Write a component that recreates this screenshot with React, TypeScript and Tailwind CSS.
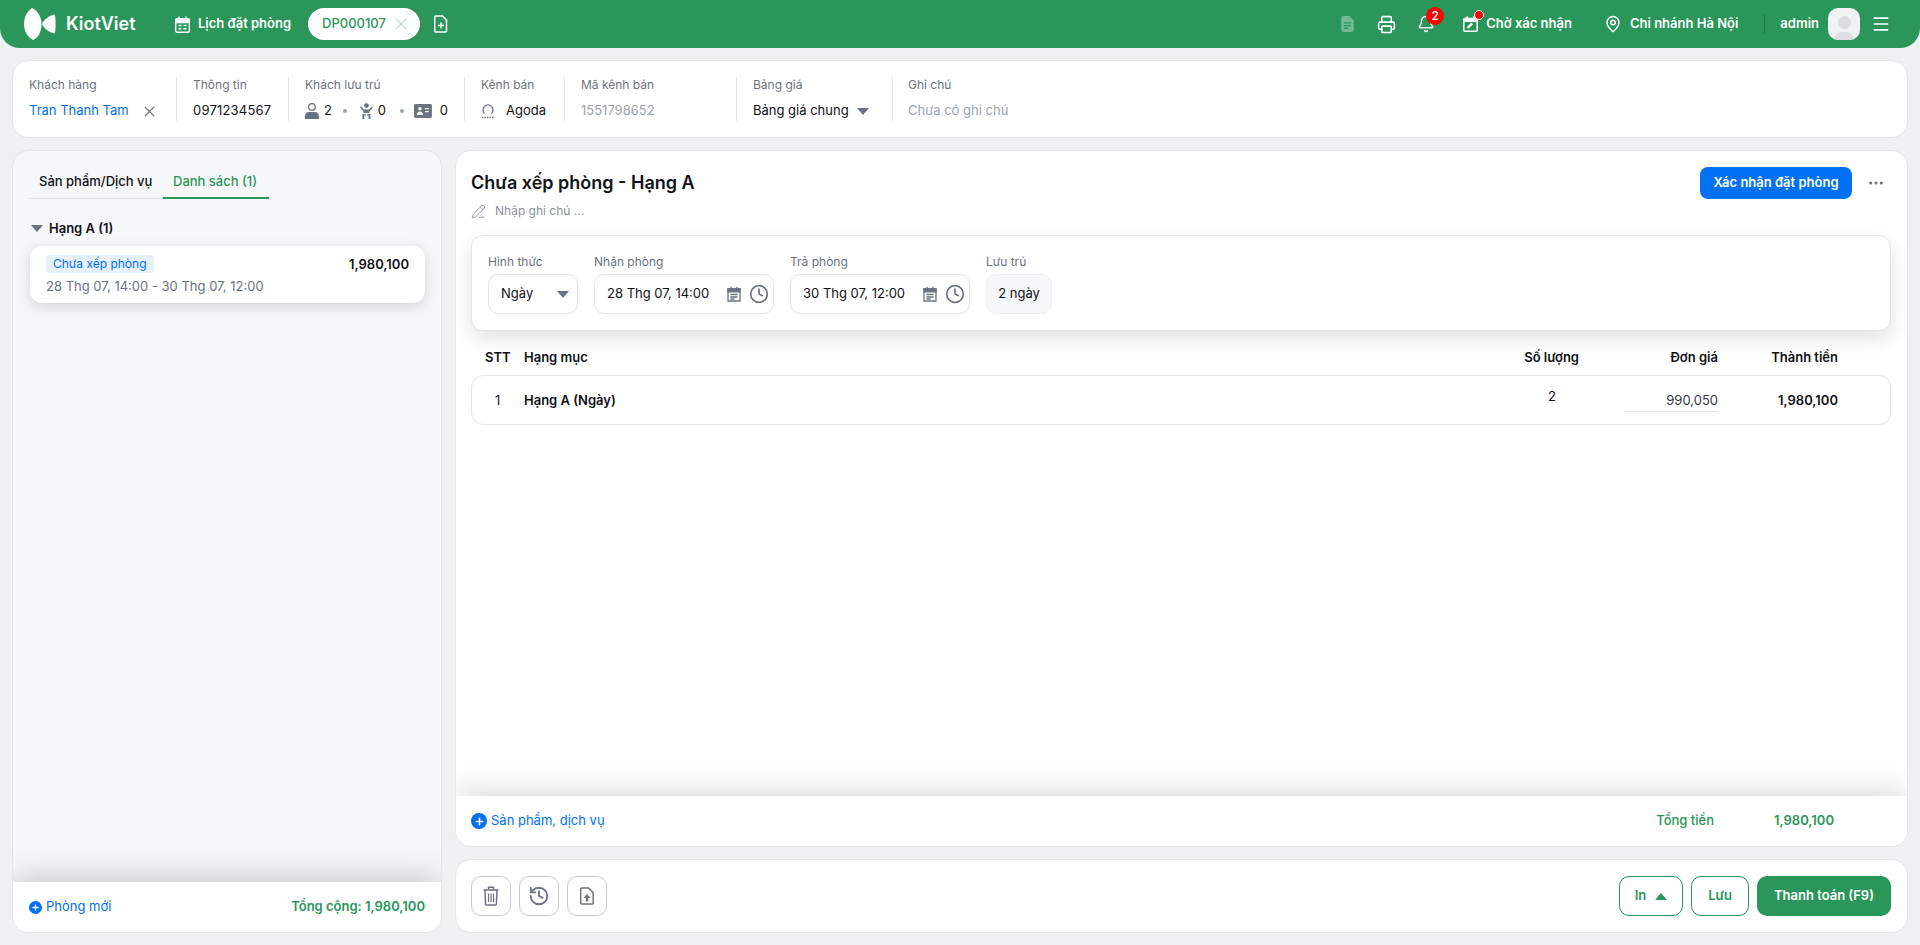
import { Bell, Clock, Ellipsis, History, MapPin, Menu, PencilLine, Plus, Printer, X } from 'lucide-react'
import type { ReactNode } from 'react'

function Caret({ up = false, className = 'text-[#6b7280]' }: { up?: boolean; className?: string }) {
  return (
    <svg viewBox="0 0 12 7" className={`h-[7px] w-3 ${className}`} fill="currentColor">
      <path d={up ? 'M6 0 12 7H0Z' : 'M0 0h12L6 7Z'} />
    </svg>
  )
}

function Logo() {
  return (
    <svg viewBox="0 0 32 32" className="h-8 w-8 text-white" fill="currentColor">
      <path d="M8 0C2.500 4 0 9.500 0 16s2.500 12 9 16c5.500-2 8.500-8.500 8.500-16S13 2 8 0Z" />
      <path d="M30.500 6.500c-5.500 1-10.500 5-12.500 9.500 2 4.500 7 8.500 12.500 9.500 1.500-3 1.500-16 0-19Z" />
    </svg>
  )
}

function CalendarHead() {
  return (
    <svg viewBox="0 0 15 17" className="h-[17px] w-[15px] text-white" fill="none" stroke="currentColor" strokeWidth="1.400">
      <rect x=".7" y="2.700" width="13.600" height="13.600" rx="1.500" />
      <path d="M.7 3.500h13.600v3H.7Z" fill="currentColor" />
      <path d="M4 .5v3M11 .5v3M3.500 9.500h3M8.500 9.500h3M3.500 12.800h3M8.500 12.800h3" />
    </svg>
  )
}

function CalendarPen() {
  return (
    <svg viewBox="0 0 15 16" className="h-4 w-[15px] text-white" fill="none" stroke="currentColor" strokeWidth="1.500">
      <rect x=".8" y="2.500" width="13.400" height="12.700" rx="1" />
      <path d="M.8 3.500h13.400v1.800H.8Z" fill="currentColor" />
      <path d="M4 .3v3M11 .3v3" />
      <path d="M4.300 12.200v-1.700l4-4 1.700 1.700-4 4Z" fill="currentColor" stroke="none" />
    </svg>
  )
}

function DocPlus() {
  return (
    <svg viewBox="0 0 14 18" className="h-[18px] w-[14px] text-white" fill="none" stroke="currentColor" strokeWidth="1.500">
      <path d="M1.500 1h7l4 4v11a1 1 0 0 1-1 1h-10a1 1 0 0 1-.8-.8V1.800A.8.8 0 0 1 1.500 1Z" />
      <path d="M7 7.500v6M4 10.500h6" />
    </svg>
  )
}

function DocFilled() {
  return (
    <svg viewBox="0 0 14 18" className="h-4 w-[13px] text-white/35" fill="currentColor">
      <path d="M2 0h7l5 5v11a2 2 0 0 1-2 2H2a2 2 0 0 1-2-2V2a2 2 0 0 1 2-2Zm1 7v1.500h8V7Zm0 3v1.500h8V10Zm0 3v1.500h5V13Z" fillRule="evenodd" />
    </svg>
  )
}

function PersonIcon() {
  return (
    <svg viewBox="0 0 14 16" className="h-4 w-[14px] text-[#6b7280]" fill="currentColor">
      <path d="M7 0a4 4 0 1 1 0 8 4 4 0 0 1 0-8Zm0 1.300a2.700 2.700 0 1 0 0 5.400 2.700 2.700 0 0 0 0-5.400Z" fillRule="evenodd" />
      <path d="M0 16v-3c0-2 1.500-4 4-4h6c2.500 0 4 2 4 4v3Z" />
    </svg>
  )
}

function BabyIcon() {
  return (
    <svg viewBox="0 0 13 16" className="h-4 w-[13px] text-[#6b7280]" fill="currentColor">
      <circle cx="6.500" cy="2.500" r="2.400" />
      <path d="M1 3.500 4 6.500h5l3-3 1 1L9.500 8.500V10h-6V8.500L0 4.500Z" />
      <path d="M2.500 11h3.300v1.500H4.300V16H2.500ZM7.200 11h3.300v5H8.700v-3.500H7.200Z" />
    </svg>
  )
}

function IdCardIcon() {
  return (
    <svg viewBox="0 0 18 14" className="h-[14px] w-[18px] text-[#6b7280]" fill="currentColor">
      <path d="M1.500 0h15A1.500 1.500 0 0 1 18 1.500v11a1.500 1.500 0 0 1-1.500 1.500h-15A1.500 1.500 0 0 1 0 12.500v-11A1.500 1.500 0 0 1 1.500 0ZM6 3a1.700 1.700 0 1 0 0 3.400A1.700 1.700 0 0 0 6 3ZM3 11h6c0-2-1-3.500-3-3.500S3 9 3 11Zm8-7v1.200h4V4Zm0 3v1.200h4V7Z" fillRule="evenodd" />
    </svg>
  )
}

function ChannelIcon() {
  return (
    <svg viewBox="0 0 14 16" className="h-4 w-[14px] text-[#6b7280]" fill="none" stroke="currentColor" strokeWidth="1.300">
      <path d="M3.500 10.500a5 5 0 1 1 7 0" />
      <path d="M1 14.500h12" strokeDasharray="1.500 1" />
    </svg>
  )
}

function CalendarNote() {
  return (
    <svg viewBox="0 0 14 16" className="h-4 w-[14px] text-[#6b7280]" fill="none" stroke="currentColor" strokeWidth="1.300">
      <path d="M1 3h12v12H1Z" />
      <path d="M1 3h12v2.800H1Z" fill="currentColor" />
      <path d="M4 .8v2.500M10 .8v2.500M3.500 8.500h7M3.500 11h7M3.500 13h4" />
    </svg>
  )
}

function TrashIcon() {
  return (
    <svg viewBox="0 0 16 20" className="h-5 w-4" fill="none" stroke="currentColor" strokeWidth="1.500">
      <path d="M.5 4h15M5.500 3.500V1.200h5v2.300M2 4.500l.6 13.500a1 1 0 0 0 1 1h8.800a1 1 0 0 0 1-1L14 4.500" />
      <path d="M5.500 7.500v8.500M8 7.500v8.500M10.500 7.500v8.500" strokeWidth="1.200" />
    </svg>
  )
}

function DocUpIcon() {
  return (
    <svg viewBox="0 0 14 18" className="h-[18px] w-[14px]" fill="none" stroke="currentColor" strokeWidth="1.500">
      <path d="M1.500 1h7l4.700 4.500V16a1 1 0 0 1-1 1H1.500a1 1 0 0 1-.8-.8V1.800A.8.8 0 0 1 1.500 1Z" />
      <path d="M7 7 10.500 11H8.200v3.500H5.800V11H3.500Z" fill="currentColor" stroke="none" />
    </svg>
  )
}

function Field({ label, className, children }: { label: string; className: string; children: ReactNode }) {
  return (
    <div className={`flex h-11 flex-col justify-between px-4 ${className}`}>
      <div className="text-[12px] leading-4 text-[#6b7280]">{label}</div>
      <div className="flex h-5 items-center text-[13px] text-[#0f1115]">{children}</div>
    </div>
  )
}

function PlusLink({ label, big = false }: { label: string; big?: boolean }) {
  return (
    <button className="flex items-center gap-1 text-[13px] text-[#0070f4]">
      <span className={`flex items-center justify-center rounded-full bg-[#0070f4] text-white ${big ? 'h-4 w-4' : 'h-[13px] w-[13px]'}`}>
        <Plus size={big ? 11 : 9} strokeWidth={3.500} />
      </span>
      {label}
    </button>
  )
}

function DateInput({ value }: { value: string }) {
  return (
    <div className="flex h-10 w-[180px] items-center rounded-[10px] border border-[#e3e5e8] pl-3 pr-[4px] text-[13px] text-[#0f1115]">
      <span className="flex-1">{value}</span>
      <CalendarNote />
      <Clock size={20} className="ml-[8px] text-[#6b7280]" />
    </div>
  )
}

function IconBtn({ children }: { children: ReactNode }) {
  return <button className="flex h-10 w-10 items-center justify-center rounded-[10px] border border-[#c8cbd0] text-[#6b7280]">{children}</button>
}

export default function App() {
  return (
    <div className="flex h-[945px] flex-col overflow-hidden bg-[#eff0f2] font-['Inter',sans-serif] text-[#0f1115]">
      <header className="flex h-12 shrink-0 items-center rounded-b-[20px] bg-[#2a9659] pl-6 pr-[29px] text-white">
        <Logo />
        <span className="ml-[10px] w-[109px] text-[18px] font-semibold leading-none">KiotViet</span>
        <CalendarHead />
        <span className="ml-[8px] text-[13px] font-semibold">Lịch đặt phòng</span>
        <div className="ml-[17px] flex h-8 w-[112px] items-center gap-[5px] rounded-full bg-white pl-[14px] text-[13px] font-medium text-[#2a9659]">
          DP000107
          <X size={20} strokeWidth={1.500} className="text-[#2a9659]/30" />
        </div>
        <div className="ml-[14px]"><DocPlus /></div>
        <div className="flex-1" />
        <DocFilled />
        <Printer size={19} className="ml-[23px]" />
        <div className="relative ml-[21px]">
          <Bell size={18} />
          <span className="absolute -right-[9px] -top-[8px] flex h-[18px] w-[18px] items-center justify-center rounded-full bg-[#f00] text-[12px] font-medium">2</span>
        </div>
        <div className="relative ml-[28px]">
          <CalendarPen />
          <span className="absolute -right-[6px] -top-[6px] h-[10px] w-[10px] rounded-full border border-white bg-[#f00]" />
        </div>
        <span className="ml-[8px] text-[13px] font-semibold">Chờ xác nhận</span>
        <MapPin size={18} className="ml-[32px]" />
        <span className="ml-[8px] text-[13px] font-semibold">Chi nhánh Hà Nội</span>
        <div className="ml-[26px] h-[18px] w-px bg-black/25" />
        <span className="ml-[15px] text-[13px] font-semibold">admin</span>
        <div className="ml-[9px] flex h-8 w-8 flex-col items-center justify-end overflow-hidden rounded-[10px] bg-[#f1f2f4]">
          <span className="h-[13px] w-[13px] rounded-full bg-[#dcdee1]" />
          <span className="mt-[3px] h-2 w-5 rounded-t-full bg-[#dcdee1]" />
        </div>
        <Menu size={20} className="ml-[11px]" />
      </header>

      <div className="flex min-h-0 flex-1 flex-col gap-3 p-3">
        <section className="flex h-[78px] shrink-0 items-center rounded-2xl border border-[#e3e5e8] bg-white">
          <Field label="Khách hàng" className="w-[164px] border-r border-[#e3e5e8]">
            <span className="w-[112px] text-[#0070f4]">Tran Thanh Tam</span>
            <X size={17} strokeWidth={1.500} className="text-[#6b7280]" />
          </Field>
          <Field label="Thông tin" className="w-[112px] border-r border-[#e3e5e8]"><span className="tracking-[0.2px]">0971234567</span></Field>
          <Field label="Khách lưu trú" className="w-[176px] border-r border-[#e3e5e8]">
            <PersonIcon /><span className="ml-[5px]">2</span>
            <span className="ml-[11px] mr-[13px] h-1 w-1 rounded-full bg-[#9ca3af]" />
            <BabyIcon /><span className="ml-[5px]">0</span>
            <span className="ml-[14px] mr-[10px] h-1 w-1 rounded-full bg-[#9ca3af]" />
            <IdCardIcon /><span className="ml-2">0</span>
          </Field>
          <Field label="Kênh bán" className="w-[100px] border-r border-[#e3e5e8]"><ChannelIcon /><span className="ml-[11px]">Agoda</span></Field>
          <Field label="Mã kênh bán" className="w-[172px] border-r border-[#e3e5e8]"><span className="text-[#9ca3af]">1551798652</span></Field>
          <Field label="Bảng giá" className="w-[156px] border-r border-[#e3e5e8]">Bảng giá chung<span className="ml-2"><Caret /></span></Field>
          <Field label="Ghi chú" className="-ml-px flex-1"><span className="text-[#9ca3af]">Chưa có ghi chú</span></Field>
        </section>

        <div className="flex min-h-0 flex-1 gap-[13px]">
          <aside className="flex w-[430px] shrink-0 flex-col overflow-hidden rounded-2xl border border-[#e3e5e8] bg-[#f6f7f9]">
            <div className="flex-1 px-4 pt-[15px]">
              <div className="flex text-[13px] font-medium">
                <button className="h-[33px] w-[134px] border-b border-[#e3e5e8] pl-[10px] text-left">Sản phẩm/Dịch vụ</button>
                <button className="h-[33px] w-[106px] border-b-2 border-[#2a9659] pl-[10px] text-left text-[#2a9659]">Danh sách (1)</button>
              </div>
              <div className="mt-5 flex items-center gap-[6px] px-[2px] text-[13px] font-semibold">
                <Caret />
                Hạng A (1)
              </div>
              <div className="ml-px mt-[7px] flex h-[57px] justify-between rounded-xl bg-white px-4 pt-[9px] shadow-[0_4px_14px_rgba(0,0,0,0.14)]">
                <div>
                  <span className="block h-[18px] w-fit rounded bg-[#e6f1fe] px-[7px] text-[12px] leading-[18px] text-[#0070f4]">Chưa xếp phòng</span>
                  <div className="mt-[5px] text-[13px] leading-4 text-[#6b7280]">28 Thg 07, 14:00 - 30 Thg 07, 12:00</div>
                </div>
                <div className="pt-[1px] text-[13px] font-semibold leading-4">1,980,100</div>
              </div>
            </div>
            <div className="flex h-[50px] shrink-0 items-center justify-between bg-white px-4 shadow-[0_-6px_30px_rgba(0,0,0,0.18)]">
              <PlusLink label="Phòng mới" />
              <span className="text-[13px] font-semibold text-[#2a9659]">Tổng cộng: 1,980,100</span>
            </div>
          </aside>

          <div className="flex min-w-0 flex-1 flex-col gap-3">
            <main className="flex min-h-0 flex-1 flex-col overflow-hidden rounded-2xl border border-[#e3e5e8] bg-white">
              <div className="flex-1 pl-[15px] pr-4 pt-4">
                <div className="flex items-start justify-between">
                  <div>
                    <h1 className="text-[18px] font-semibold leading-8">Chưa xếp phòng - Hạng A</h1>
                    <div className="mt-[3px] flex items-center gap-[9px] text-[12px] text-[#8b919a]">
                      <PencilLine size={15} strokeWidth={1.500} className="text-[#8b919a]" />
                      Nhập ghi chú ...
                    </div>
                  </div>
                  <div className="flex items-center">
                    <button className="h-8 w-[152px] rounded-lg bg-[#0070f4] text-[13px] font-semibold text-white">Xác nhận đặt phòng</button>
                    <Ellipsis size={18} className="ml-[15px] mr-[6px] text-[#6b7280]" />
                  </div>
                </div>
                <div className="mt-[15px] flex h-[96px] gap-4 rounded-xl border border-[#e3e5e8] bg-white px-4 pt-[18px] shadow-[0_8px_20px_rgba(0,0,0,0.12)]">
                  <div>
                    <div className="mb-[4px] text-[12px] leading-4 text-[#6b7280]">Hình thức</div>
                    <div className="flex h-10 w-[90px] items-center justify-between rounded-[10px] border border-[#e3e5e8] pl-3 pr-[8px] text-[13px]">Ngày<Caret /></div>
                  </div>
                  <div>
                    <div className="mb-[4px] text-[12px] leading-4 text-[#6b7280]">Nhận phòng</div>
                    <DateInput value="28 Thg 07, 14:00" />
                  </div>
                  <div>
                    <div className="mb-[4px] text-[12px] leading-4 text-[#6b7280]">Trả phòng</div>
                    <DateInput value="30 Thg 07, 12:00" />
                  </div>
                  <div>
                    <div className="mb-[4px] text-[12px] leading-4 text-[#6b7280]">Lưu trú</div>
                    <div className="flex h-10 w-[66px] items-center justify-center rounded-[10px] border border-[#eff0f2] bg-[#f6f7f9] text-[13px]">2 ngày</div>
                  </div>
                </div>
                <div className="mb-[4px] mt-[14px] flex h-[26px] items-center pr-[53px] text-[13px] font-semibold">
                  <span className="w-[53px] pl-[14px]">STT</span>
                  <span className="flex-1">Hạng mục</span>
                  <span className="text-right">Số lượng</span>
                  <span className="w-[139px] text-right">Đơn giá</span>
                  <span className="w-[120px] text-right">Thành tiền</span>
                </div>
                <div className="flex h-[50px] items-center rounded-xl border border-[#e3e5e8] pr-[52px] pt-[2px] text-[13px]">
                  <span className="w-[52px] pl-[23px]">1</span>
                  <span className="flex-1 font-semibold">Hạng A (Ngày)</span>
                  <span className="-mt-[8px] w-[54px] text-center">2</span>
                  <span className="ml-[45px] flex h-[22px] w-[94px] items-center justify-end border-b border-[#e3e5e8] text-[#333842]">990,050</span>
                  <span className="w-[120px] text-right font-semibold">1,980,100</span>
                </div>
              </div>
              <div className="flex h-[50px] shrink-0 items-center bg-white pl-[15px] pr-[73px] shadow-[0_-6px_30px_rgba(0,0,0,0.14)]">
                <PlusLink label="Sản phẩm, dịch vụ" big />
                <span className="ml-auto text-[13px] font-medium text-[#2a9659]">Tổng tiền</span>
                <span className="ml-[60px] text-[13px] font-semibold text-[#2a9659]">1,980,100</span>
              </div>
            </main>
            <footer className="flex h-[74px] shrink-0 items-center gap-2 rounded-2xl border border-[#e3e5e8] bg-white pl-[15px] pr-4">
              <IconBtn><TrashIcon /></IconBtn>
              <IconBtn><History size={22} /></IconBtn>
              <IconBtn><DocUpIcon /></IconBtn>
              <div className="flex-1" />
              <button className="flex h-10 w-16 items-center justify-center gap-[9px] rounded-[10px] border border-[#2a9659] text-[13px] font-semibold text-[#2a9659]">In<Caret up className="text-[#2a9659]" /></button>
              <button className="h-10 w-[58px] rounded-[10px] border border-[#2a9659] text-[13px] font-semibold text-[#2a9659]">Lưu</button>
              <button className="h-10 w-[134px] rounded-[10px] bg-[#2a9659] text-[13px] font-semibold text-white">Thanh toán (F9)</button>
            </footer>
          </div>
        </div>
      </div>
    </div>
  )
}
